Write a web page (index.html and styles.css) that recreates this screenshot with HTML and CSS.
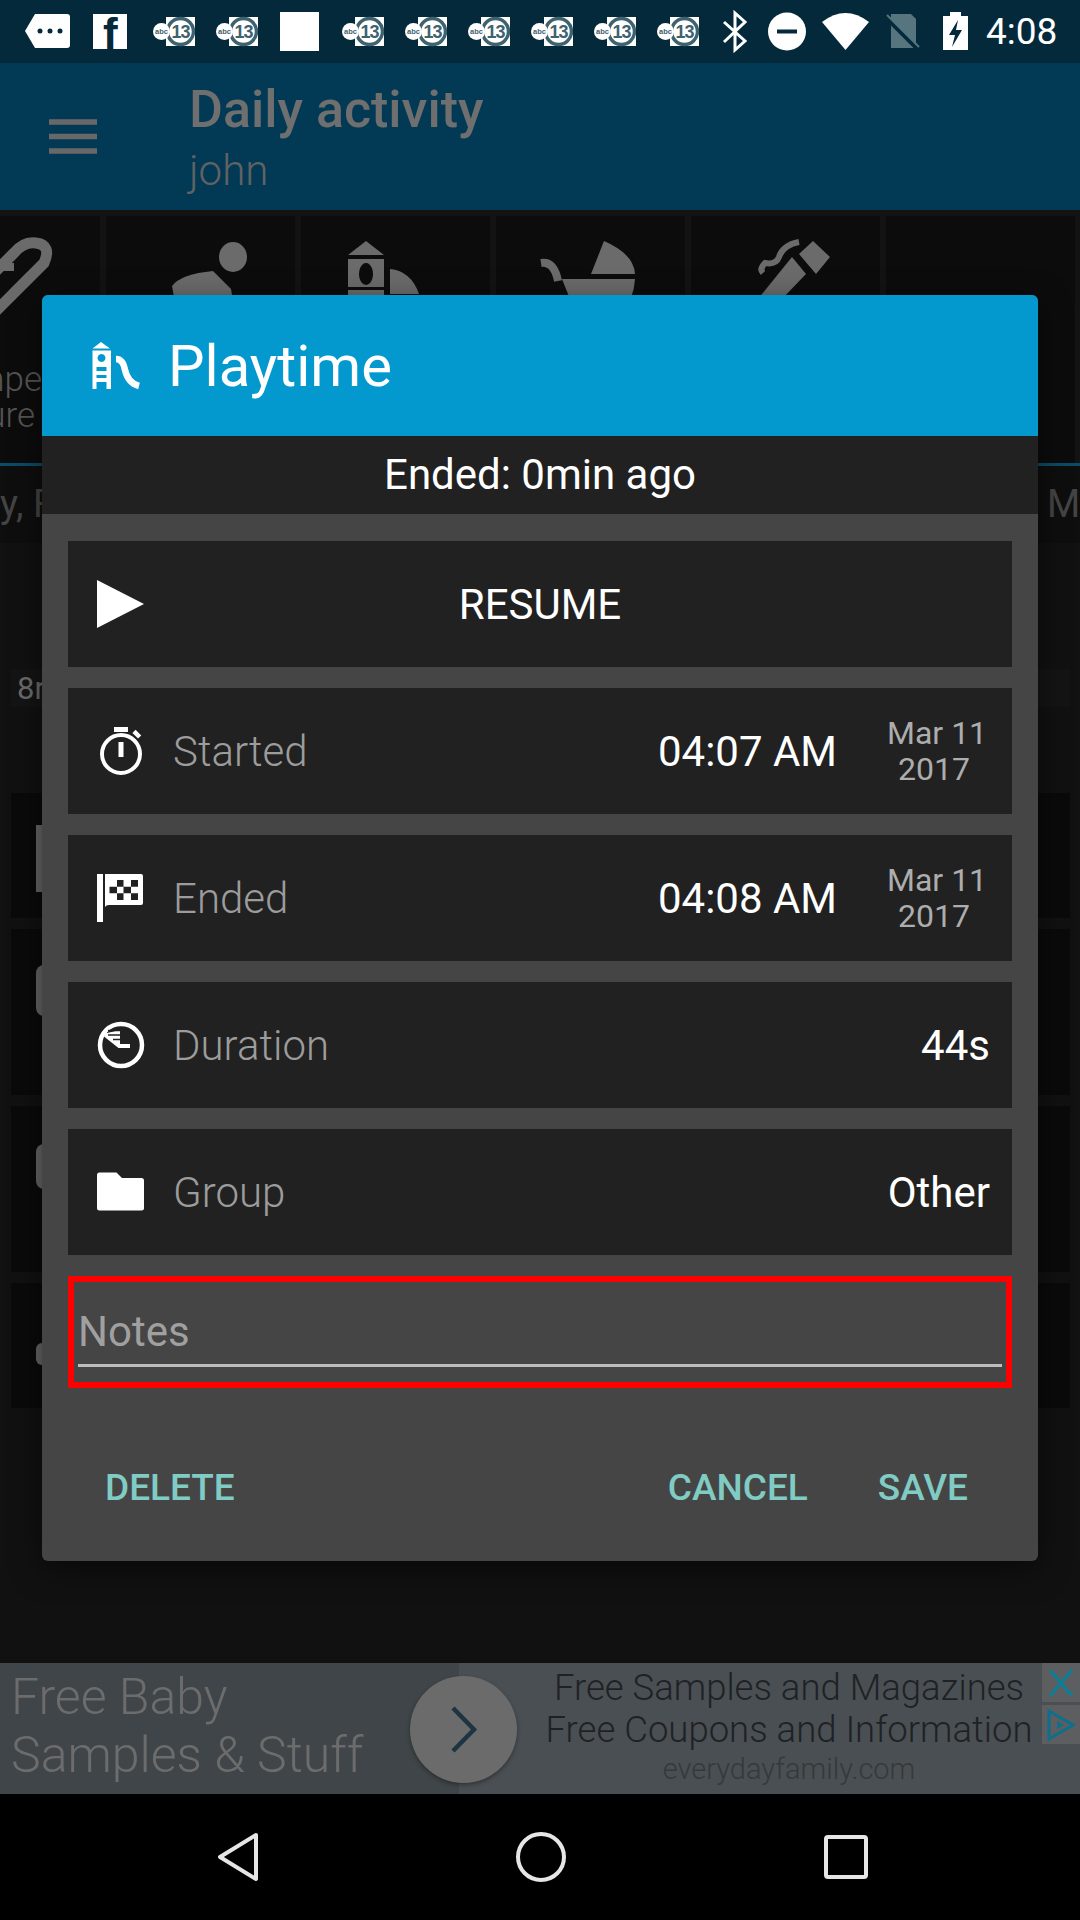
FILE: index.html
```html
<!DOCTYPE html>
<html lang="en">
<head>
  <meta charset="UTF-8">
  <meta name="viewport" content="width=device-width, initial-scale=1.0">
  <title>Daily activity</title>
  <link rel="stylesheet" href="styles.css">
</head>
<body>
  <svg class="defs" width="0" height="0">
    <symbol id="abc" viewBox="0 0 42 63">
      <rect x="13" y="17" width="29" height="29" fill="#fff"/>
      <circle cx="27.500" cy="31.5" r="13" fill="#fff" stroke="#3f626f" stroke-width="3.500"/>
      <text x="27.500" y="38" text-anchor="middle" class="abc-num">13</text>
      <circle cx="8.500" cy="31.5" r="8.500" fill="#fff"/>
      <text x="8.500" y="34" text-anchor="middle" class="abc-txt">abc</text>
    </symbol>
  </svg>

  <div class="status">
    <div class="status-left">
      <svg width="47" height="63" viewBox="0 0 47 63"><path d="M0 31 L10 14 H42 Q45 14 45 17 V45 Q45 48 42 48 H10 Z" fill="#fff"/><circle cx="15" cy="31" r="2.5" fill="#04293b"/><circle cx="25" cy="31" r="2.5" fill="#04293b"/><circle cx="35" cy="31" r="2.5" fill="#04293b"/></svg>
      <svg width="39" height="63" viewBox="0 0 39 63"><rect y="14" width="34" height="35" fill="#fff"/><text x="10" y="49" class="fb">f</text></svg>
      <svg class="abc" width="42" height="63"><use href="#abc"/></svg>
      <svg class="abc" width="42" height="63"><use href="#abc"/></svg>
      <svg width="42" height="63" viewBox="0 0 42 63"><rect x="1" y="12" width="39" height="39" fill="#fff"/></svg>
      <svg class="abc" width="42" height="63"><use href="#abc"/></svg>
      <svg class="abc" width="42" height="63"><use href="#abc"/></svg>
      <svg class="abc" width="42" height="63"><use href="#abc"/></svg>
      <svg class="abc" width="42" height="63"><use href="#abc"/></svg>
      <svg class="abc" width="42" height="63"><use href="#abc"/></svg>
      <svg class="abc" width="42" height="63"><use href="#abc"/></svg>
    </div>
    <div class="status-right">
      <svg width="29" height="63" viewBox="0 0 29 63"><path d="M1 22 L22 41 L12 50 V13 L22 22 L1 42" fill="none" stroke="#fff" stroke-width="3"/></svg>
      <svg width="38" height="63" viewBox="0 0 38 63"><circle cx="19" cy="31.5" r="19" fill="#fff"/><rect x="9" y="29.5" width="20" height="4" fill="#04293b"/></svg>
      <svg width="47" height="63" viewBox="0 0 47 63"><path d="M0 22 Q23.5 4 47 22 L23.5 50 Z" fill="#fff"/></svg>
      <svg width="42" height="63" viewBox="0 0 42 63"><path d="M6 14 H26 L31 19 V48 H6 Z" fill="#57757f"/><path d="M0 16 L34 50" stroke="#04293b" stroke-width="5"/><path d="M2 15 L34 47" stroke="#57757f" stroke-width="2"/></svg>
      <svg width="27" height="63" viewBox="0 0 27 63"><path d="M7 12 H18 V16 H25 V50 H0 V16 H7 Z" fill="#fff"/><path d="M15 20 L6 35 H12 L9 47 L19 30 H13 Z" fill="#04293b"/></svg>
      <span class="clock">4:08</span>
    </div>
  </div>

  <div class="appbar">
    <svg class="menu" width="48" height="36" viewBox="0 0 48 36"><path d="M0 3 H48 M0 17.5 H48 M0 32 H48" stroke="#686868" stroke-width="5.5"/></svg>
    <div class="appbar-text">
      <div class="appbar-title">Daily activity</div>
      <div class="appbar-sub">john</div>
    </div>
  </div>

  <div class="tabs">
    <div class="tab tab-first">
      <svg width="100" height="80" viewBox="0 0 100 80"><path d="M-8 76 L44 24 Q52 6 36 4 Q24 2 14 14 L-6 34" fill="none" stroke="#6b6b6b" stroke-width="11"/><path d="M12 54 L30 36 M-2 28 L14 28" fill="none" stroke="#6b6b6b" stroke-width="8"/></svg>
      <div class="tab-label"><span>npe</span><span class="tab-label-2">ure</span></div>
    </div>
    <div class="tab">
      <svg width="189" height="80" viewBox="0 0 189 80"><ellipse cx="127" cy="18" rx="14" ry="15" fill="#6b6b6b"/><path d="M66 47 Q75 35 107 32 L125 50 L130 80 H72 Z" fill="#6b6b6b"/></svg>
    </div>
    <div class="tab">
      <svg width="189" height="80" viewBox="0 0 189 80"><path d="M47 16 H83 L65 2 Z" fill="#6b6b6b"/><path fill-rule="evenodd" d="M47 20 H83 V48 H47 Z M65 24 a7 11 0 1 0 0.01 0 Z" fill="#6b6b6b"/><path d="M89 30 Q110 32 118 55 H89 Z" fill="#6b6b6b"/><rect x="47" y="51" width="36" height="8" fill="#6b6b6b"/></svg>
    </div>
    <div class="tab">
      <svg width="189" height="80" viewBox="0 0 189 80"><path d="M108 2 Q138 15 139 35 H95 Z" fill="#6b6b6b"/><path d="M45 24 Q58 22 62 42" fill="none" stroke="#6b6b6b" stroke-width="8"/><path d="M66 40 H139 Q138 60 125 75 H80 Z" fill="#6b6b6b"/></svg>
    </div>
    <div class="tab">
      <svg width="189" height="80" viewBox="0 0 189 80"><path d="M122 2 L139 18 L125 35 L108 15 Z" fill="#6b6b6b"/><path d="M101 18 L115 35 L91 60 L67 60 Z" fill="#6b6b6b"/><path d="M108 3 Q92 6 88 18 Q85 26 74 24 Q68 30 72 34" fill="none" stroke="#6b6b6b" stroke-width="6"/></svg>
    </div>
    <div class="tab"></div>
  </div>

  <div class="dates">
    <span class="date-tab">y, F</span>
    <span class="date-tab">Ma</span>
  </div>

  <div class="list">
    <div class="list-summary">8r</div>
    <div class="list-card card-a"><span class="peek peek-bar"></span></div>
    <div class="list-card card-b"><span class="peek peek-oval"></span></div>
    <div class="list-card card-b"><span class="peek peek-round"></span></div>
    <div class="list-card card-a"><span class="peek peek-dot"></span></div>
  </div>

  <div class="ad">
    <div class="ad-left">Free Baby<br>Samples &amp; Stuff</div>
    <div class="ad-right">
      <div class="ad-line">Free Samples and Magazines</div>
      <div class="ad-line">Free Coupons and Information</div>
      <div class="ad-site">everydayfamily.com</div>
    </div>
    <div class="ad-go">
      <svg width="26" height="47" viewBox="0 0 26 47"><path d="M2 2 L23 23.5 L2 45" fill="none" stroke="#1f3442" stroke-width="4.5"/></svg>
    </div>
    <div class="ad-marks">
      <div class="ad-mark"><svg width="26" height="30" viewBox="0 0 26 30"><path d="M2 2 L24 28 M24 2 L2 28" stroke="#0b7f99" stroke-width="3"/></svg></div>
      <div class="ad-mark"><svg width="30" height="34" viewBox="0 0 30 34"><path d="M3 3 L27 17 L3 31 Z" fill="none" stroke="#0d6f8c" stroke-width="3"/><path d="M11 13 L18 17 L11 21 Z" fill="#0d6f8c"/></svg></div>
    </div>
  </div>

  <div class="nav">
    <svg width="42" height="50" viewBox="0 0 42 50"><path d="M39 3 L3 25 L39 47 Z" fill="none" stroke="#e6e6e6" stroke-width="4" stroke-linejoin="round"/></svg>
    <svg width="50" height="50" viewBox="0 0 50 50"><circle cx="25" cy="25" r="23" fill="none" stroke="#e6e6e6" stroke-width="4"/></svg>
    <svg width="44" height="44" viewBox="0 0 44 44"><rect x="2" y="2" width="40" height="40" rx="2" fill="none" stroke="#e6e6e6" stroke-width="4"/></svg>
  </div>

  <div class="dialog">
    <div class="dialog-head">
      <svg width="48" height="48" viewBox="0 0 48 48">
        <path d="M0.5 6.5 H18 L9 0 Z" fill="#fff"/>
        <path fill-rule="evenodd" d="M0.5 8.5 H19 V25 H0.5 Z M9.5 12 a4 4 0 1 0 0.01 0 Z" fill="#fff"/>
        <path d="M0.5 25 H4.5 V47 H0.5 Z M14.5 25 H19 V47 H14.5 Z M4 29 H15 V33 H4 Z M4 36 H15 V40 H4 Z" fill="#fff"/>
        <path d="M24 17 Q31 17 33 28 Q36 41 47 44" fill="none" stroke="#fff" stroke-width="6.5"/>
      </svg>
      <span class="dialog-title">Playtime</span>
    </div>
    <div class="ended-row">Ended: 0min ago</div>
    <div class="dialog-body">
      <div class="row row-resume">
        <svg width="48" height="48" viewBox="0 0 48 48"><path d="M0 0 L47 24 L0 48 Z" fill="#fff"/></svg>
        <span class="resume-text">RESUME</span>
      </div>
      <div class="row">
        <svg width="48" height="48" viewBox="0 0 48 48"><circle cx="24" cy="27" r="19" fill="none" stroke="#fff" stroke-width="4"/><rect x="17" y="0" width="14" height="5" fill="#fff"/><rect x="21.5" y="15" width="5" height="15" fill="#fff"/><rect x="36" y="5" width="8" height="4.5" transform="rotate(45 40 7)" fill="#fff"/></svg>
        <span class="row-label">Started</span>
        <span class="row-value row-time">04:07 AM</span>
        <span class="row-date">Mar 11<br>2017</span>
      </div>
      <div class="row">
        <svg width="48" height="48" viewBox="0 0 48 48"><rect x="0" y="0" width="6" height="48" fill="#fff"/><path fill-rule="evenodd" d="M8 0 H44 Q46 0 46 2 V29 Q46 31 44 31 H12 Q9 31 8 33 Z M20 6 V12.7 H26.5 V6 Z M34 6 V12.7 H41 V6 Z M12.5 12.7 V19.3 H20 V12.7 Z M26.5 12.7 V19.3 H34 V12.7 Z M20 19.3 V26 H26.5 V19.3 Z M34 19.3 V26 H41 V19.3 Z" fill="#fff"/></svg>
        <span class="row-label">Ended</span>
        <span class="row-value row-time">04:08 AM</span>
        <span class="row-date">Mar 11<br>2017</span>
      </div>
      <div class="row">
        <svg width="48" height="48" viewBox="0 0 48 48"><circle cx="24" cy="24" r="21" fill="none" stroke="#fff" stroke-width="4.5"/><path d="M8 12.5 L23 9 V23 H33 V27 H21.5 L7 15.5 Z" fill="#fff"/><path d="M11 9.5 H24 M11 14 H23 M16 18.5 H25" stroke="#212121" stroke-width="1.6"/></svg>
        <span class="row-label">Duration</span>
        <span class="row-value">44s</span>
      </div>
      <div class="row">
        <svg width="48" height="48" viewBox="0 0 48 48"><path d="M0 7 Q0 4.5 2.500 4.500 H19.500 L25 10 H44.500 Q47 10 47 12.500 V40 Q47 42.500 44.500 42.500 H2.500 Q0 42.500 0 40 Z" fill="#fff"/></svg>
        <span class="row-label">Group</span>
        <span class="row-value">Other</span>
      </div>
      <div class="notes-box">
        <div class="notes-field">Notes</div>
      </div>
    </div>
    <div class="dialog-actions">
      <span class="action">DELETE</span>
      <span class="action action-cancel">CANCEL</span>
      <span class="action action-save">SAVE</span>
    </div>
  </div>
</body>
</html>
```

FILE: styles.css
```css
* {
  box-sizing: border-box;
}
body {
  margin: 0;
  width: 1080px;
  height: 1920px;
  overflow: hidden;
  position: relative;
  display: flex;
  flex-direction: column;
  background: #111;
  font-family: Roboto, sans-serif;
  color: #fff;
}
svg {
  display: block;
  flex: none;
  overflow: visible;
}
.defs {
  position: absolute;
}
.status {
  height: 63px;
  background: #04293b;
  display: flex;
  align-items: center;
  justify-content: space-between;
  padding: 0 23px 0 25px;
}
.status-left {
  display: flex;
  gap: 21px;
}
.status-right {
  display: flex;
  align-items: center;
  gap: 16px;
}
.abc-num {
  font: 700 18px "Liberation Sans", sans-serif;
  letter-spacing: -1px;
  fill: #3f626f;
}
.abc-txt {
  font: 700 7.5px "Liberation Sans", sans-serif;
  fill: #3f626f;
}
.fb {
  font: 700 44px "Liberation Sans", sans-serif;
  fill: #04293b;
}
.clock {
  font-size: 37px;
  width: 71px;
}
.appbar {
  height: 147px;
  background: #023a56;
  display: flex;
  align-items: center;
  padding-left: 49px;
}
.appbar-text {
  margin-left: 92px;
  padding-top: 8px;
}
.appbar-title {
  font-size: 52px;
  font-weight: 500;
  line-height: 60px;
  color: #6f6f6f;
}
.appbar-sub {
  font-size: 42px;
  font-weight: 300;
  line-height: 62px;
  color: #626262;
}
.tabs {
  height: 256px;
  padding-top: 6px;
  background: #131313;
  border-bottom: 3px solid #0b4c66;
  display: flex;
  gap: 6px;
  overflow: hidden;
}
.tab {
  width: 189px;
  flex: none;
  background: #0c0c0c;
  padding-top: 23px;
}
.tab-first {
  width: 100px;
}
.tab-label {
  margin-top: 43px;
  width: 42px;
  font-size: 35px;
  font-weight: 300;
  line-height: 36px;
  color: #555;
  display: flex;
  flex-direction: column;
  align-items: flex-end;
  white-space: nowrap;
}
.tab-label-2 {
  margin-right: 7px;
}
.dates {
  height: 77px;
  background: #0e0e0e;
  display: flex;
  justify-content: space-between;
  padding: 16px 0 0 0;
  font-size: 38px;
  line-height: 44px;
  color: #444;
}
.date-tab:last-child {
  width: 33px;
  overflow: hidden;
}
.list {
  flex: 1;
  padding: 126px 10px 0 11px;
  display: flex;
  flex-direction: column;
  gap: 11px;
  overflow: hidden;
}
.list-summary {
  height: 38px;
  margin-bottom: 75px;
  padding-left: 6px;
  background: #141414;
  font-size: 31px;
  line-height: 40px;
  color: #6b6b6b;
}
.list-card {
  background: #0a0a0a;
  padding-left: 25px;
  flex: none;
}
.card-a {
  height: 125px;
}
.card-b {
  height: 166px;
}
.peek {
  display: block;
  background: #666;
}
.peek-bar {
  width: 8px;
  height: 67px;
  margin-top: 32px;
}
.peek-oval {
  width: 8px;
  height: 51px;
  margin-top: 36px;
  border-radius: 8px 0 0 8px;
}
.peek-round {
  width: 8px;
  height: 45px;
  margin-top: 38px;
  border-radius: 8px 0 0 8px;
}
.peek-dot {
  width: 6px;
  height: 22px;
  margin-top: 60px;
  border-radius: 6px 0 0 6px;
}
.ad {
  height: 131px;
  position: relative;
  display: flex;
  background: #4a4f53;
  flex: none;
}
.ad-left {
  width: 459px;
  padding: 5px 0 0 11px;
  background: #3f4548;
  font-size: 50px;
  font-weight: 300;
  line-height: 58px;
  color: #6c6c6c;
  white-space: nowrap;
}
.ad-right {
  width: 581px;
  padding: 0 0 0 79px;
  text-align: center;
  color: #1f2225;
  white-space: nowrap;
}
.ad-line {
  font-size: 36.5px;
  font-weight: 300;
  line-height: 42px;
}
.ad-line:first-child {
  margin-top: 4px;
}
.ad-site {
  font-size: 29px;
  font-weight: 300;
  line-height: 36px;
  color: #35393c;
}
.ad-go {
  position: absolute;
  left: 410px;
  top: 13px;
  width: 107px;
  height: 107px;
  border-radius: 50%;
  background: #6b6b6b;
  box-shadow: 0 2px 4px rgba(0, 0, 0, 0.35);
  display: flex;
  align-items: center;
  justify-content: center;
}
.ad-marks {
  position: absolute;
  right: 0;
  top: 0;
  width: 38px;
  display: flex;
  flex-direction: column;
  gap: 3px;
}
.ad-mark {
  height: 39px;
  background: #5c5e5f;
  display: flex;
  align-items: center;
  justify-content: center;
}
.nav {
  height: 126px;
  flex: none;
  background: #000;
  display: flex;
  align-items: center;
  padding-left: 217px;
}
.nav svg:nth-child(2) {
  margin-left: 257px;
}
.nav svg:nth-child(3) {
  margin-left: 258px;
}
.dialog {
  position: absolute;
  left: 42px;
  top: 295px;
  width: 996px;
  height: 1266px;
  background: #454545;
  border-radius: 6px;
  overflow: hidden;
  box-shadow: 0 8px 30px rgba(0, 0, 0, 0.5);
}
.dialog-head {
  height: 141px;
  background: #0399ce;
  display: flex;
  align-items: center;
  padding-left: 50px;
  gap: 28px;
}
.dialog-title {
  font-size: 58px;
}
.ended-row {
  height: 78px;
  background: #212121;
  font-size: 42px;
  line-height: 78px;
  text-align: center;
}
.dialog-body {
  padding: 27px 26px 0;
  display: flex;
  flex-direction: column;
  gap: 21px;
}
.row {
  height: 126px;
  background: #212121;
  display: flex;
  align-items: center;
  padding: 0 22px 0 29px;
  position: relative;
  font-size: 42px;
}
.row-label {
  margin-left: 28px;
  flex: 1;
  font-weight: 300;
  color: #9c9c9c;
}
.row-time {
  margin-right: 50px;
}
.row-date {
  width: 94px;
  margin-right: 9px;
  font-size: 32px;
  line-height: 36px;
  text-align: center;
  color: #adadad;
  white-space: nowrap;
}
.row-resume {
  justify-content: center;
  padding: 0;
}
.row-resume svg {
  position: absolute;
  left: 29px;
  top: 39px;
}
.notes-box {
  height: 112px;
  border: 6px solid #f00;
  padding: 0 4px;
}
.notes-field {
  height: 85px;
  padding-top: 26px;
  border-bottom: 3px solid #bdbdbd;
  font-size: 42px;
  line-height: 48px;
  color: #a0a0a0;
}
.dialog-actions {
  display: flex;
  padding: 78px 70px 0 63px;
  font-size: 37px;
  font-weight: 500;
  line-height: 44px;
  color: #80cbc4;
}
.action-cancel {
  margin-left: auto;
}
.action-save {
  margin-left: 70px;
}
```
